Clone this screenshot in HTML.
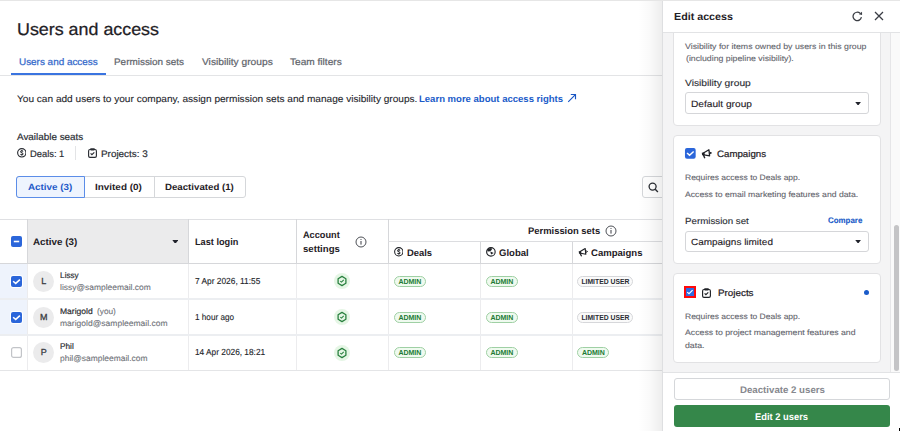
<!DOCTYPE html>
<html><head><meta charset="utf-8"><style>
html,body{margin:0;padding:0;background:#fff;width:900px;height:431px;overflow:hidden;position:relative}
body{font-family:"Liberation Sans",sans-serif}
.t{position:absolute;white-space:nowrap;line-height:1;transform-origin:0 0;text-rendering:geometricPrecision}
.r{position:absolute}
.av{width:21px;height:21px;border-radius:50%;background:#ebebec;color:#3a3d44;font-size:9px;line-height:21px;text-align:center;-webkit-text-stroke:0.3px #3a3d44}
.badge{height:11px;box-sizing:border-box;border-radius:6px;font-size:7px;font-weight:700;line-height:9px;text-align:center;letter-spacing:0}
.badge.g{border:1px solid #9fd0a4;background:#effaef;color:#217a34}
.badge.n{border:1px solid #d6d7da;background:#fafafa;color:#2a2d33;font-size:6.8px}
.card{background:#fff;border:1px solid #e2e2e4;border-radius:4px;box-sizing:border-box}
.sel{background:#fff;border:1px solid #d5d6d9;border-radius:3px;box-sizing:border-box}
</style></head><body>
<div class="t" style="left:16.55px;top:21px;font-size:17px;color:#1f2126;transform:scaleX(1.0508);-webkit-text-stroke:0.25px #1f2126;">Users and access</div>
<div class="t" style="left:19.00px;top:58px;font-size:9.5px;color:#356acb;transform:scaleX(1.0429);-webkit-text-stroke:0.25px #356acb;">Users and access</div>
<div class="t" style="left:114.40px;top:58px;font-size:9.5px;color:#62656c;transform:scaleX(1.0446);-webkit-text-stroke:0.22px #62656c;">Permission sets</div>
<div class="t" style="left:202.00px;top:58px;font-size:9.5px;color:#62656c;transform:scaleX(1.0745);-webkit-text-stroke:0.22px #62656c;">Visibility groups</div>
<div class="t" style="left:289.60px;top:58px;font-size:9.5px;color:#62656c;transform:scaleX(1.0652);-webkit-text-stroke:0.22px #62656c;">Team filters</div>
<div class="r" style="left:0px;top:75px;width:663px;height:1px;background:#e3e4e6"></div>
<div class="r" style="left:11px;top:73px;width:95px;height:2px;background:#3a74e0"></div>
<div class="t" style="left:16.70px;top:95px;font-size:9.5px;color:#24262b;transform:scaleX(1.0619);-webkit-text-stroke:0.1px #24262b;">You can add users to your company, assign permission sets and manage visibility groups.</div>
<div class="t" style="left:419.20px;top:95px;font-size:9.5px;color:#1a5bc9;font-weight:700;transform:scaleX(1.0033);">Learn more about access rights</div>
<svg class="r" style="left:566.8px;top:93.2px" width="10" height="10" viewBox="0 0 10 10"><path d="M1.2 8.8 L8.4 1.6 M3.8 1.5 H8.5 V6.2" stroke="#1a56c4" stroke-width="1.15" fill="none"/></svg>
<div class="t" style="left:16.50px;top:133px;font-size:9.5px;color:#2a2d33;transform:scaleX(1.0395);-webkit-text-stroke:0.18px #2a2d33;">Available seats</div>
<svg class="r" style="left:16.9px;top:148.3px" width="9.6" height="9.6" viewBox="0 0 10 10"><circle cx="5" cy="5" r="4.35" stroke="#2a2d33" stroke-width="1.2" fill="none"/><path d="M6.2 3.75 C6 3.25 5.6 3.0 5 3.0 C4.3 3.0 3.8 3.4 3.8 3.95 C3.8 5.0 6.25 4.7 6.25 5.95 C6.25 6.6 5.7 7.0 5 7.0 C4.4 7.0 3.9 6.75 3.7 6.3" stroke="#2a2d33" stroke-width="1.05" fill="none"/><path d="M5 2.1 V3.1 M5 6.9 V7.9" stroke="#2a2d33" stroke-width="1.05"/></svg>
<div class="t" style="left:30.00px;top:150px;font-size:9.5px;color:#2a2d33;transform:scaleX(0.9836);-webkit-text-stroke:0.18px #2a2d33;">Deals: 1</div>
<div class="r" style="left:75px;top:146px;width:1px;height:13.5px;background:#e3e4e6"></div>
<svg class="r" style="left:87.5px;top:148.2px" width="9" height="10" viewBox="0 0 9 10"><rect x="0.6" y="1.5" width="7.8" height="7.9" rx="1.4" stroke="#2a2d33" stroke-width="1.15" fill="none"/><rect x="2.1" y="0.2" width="4.8" height="2.2" rx="0.8" fill="#2a2d33"/><path d="M2.6 5.4 L3.9 6.7 L6.3 4.3" stroke="#2a2d33" stroke-width="1.15" fill="none"/></svg>
<div class="t" style="left:100.50px;top:150px;font-size:9.5px;color:#2a2d33;transform:scaleX(1.0427);-webkit-text-stroke:0.18px #2a2d33;">Projects: 3</div>
<div class="r" style="left:16px;top:176px;width:230px;height:21.5px;border:1px solid #d5d7da;border-radius:3px;box-sizing:border-box;background:#fff"></div>
<div class="r" style="left:16px;top:176px;width:68.5px;height:21.5px;border:1px solid #5b8de8;border-radius:3px 0 0 3px;box-sizing:border-box;background:#eef4fe"></div>
<div class="r" style="left:153.5px;top:176px;width:1px;height:21.5px;background:#d5d7da"></div>
<div class="t" style="left:28.00px;top:183px;font-size:9.02px;color:#1e59c8;font-weight:700;transform:scaleX(1.0916);">Active (3)</div>
<div class="t" style="left:94.80px;top:183px;font-size:9.02px;color:#1f2126;font-weight:700;transform:scaleX(1.0992);">Invited (0)</div>
<div class="t" style="left:164.70px;top:183px;font-size:9.02px;color:#1f2126;font-weight:700;transform:scaleX(1.0728);">Deactivated (1)</div>
<div class="r" style="left:642px;top:176px;width:40px;height:21.5px;border:1px solid #d5d7da;border-radius:3px;box-sizing:border-box;background:#fff"></div>
<svg class="r" style="left:647.5px;top:182px" width="11" height="11" viewBox="0 0 11 11"><circle cx="4.6" cy="4.6" r="3.5" stroke="#2a2d33" stroke-width="1.3" fill="none"/><path d="M7.2 7.2 L9.9 9.9" stroke="#2a2d33" stroke-width="1.4"/></svg>
<div class="r" style="left:0px;top:219px;width:663px;height:1px;background:#dfe0e3"></div>
<div class="r" style="left:28px;top:220px;width:160px;height:43px;background:#ebebec"></div>
<div class="r" style="left:0px;top:264px;width:27px;height:71px;background:#eef3fc"></div>
<div class="r" style="left:27px;top:219px;width:1px;height:44px;background:#d6d7da"></div>
<div class="r" style="left:27px;top:263px;width:1px;height:107px;background:#ececee"></div>
<div class="r" style="left:188px;top:219px;width:1px;height:44px;background:#d6d7da"></div>
<div class="r" style="left:188px;top:263px;width:1px;height:107px;background:#ececee"></div>
<div class="r" style="left:296px;top:219px;width:1px;height:44px;background:#d6d7da"></div>
<div class="r" style="left:296px;top:263px;width:1px;height:107px;background:#ececee"></div>
<div class="r" style="left:388px;top:219px;width:1px;height:44px;background:#d6d7da"></div>
<div class="r" style="left:388px;top:263px;width:1px;height:107px;background:#ececee"></div>
<div class="r" style="left:480px;top:241px;width:1px;height:22px;background:#d6d7da"></div>
<div class="r" style="left:480px;top:263px;width:1px;height:107px;background:#ececee"></div>
<div class="r" style="left:572px;top:241px;width:1px;height:22px;background:#d6d7da"></div>
<div class="r" style="left:572px;top:263px;width:1px;height:107px;background:#ececee"></div>
<div class="r" style="left:388px;top:241px;width:275px;height:1px;background:#dcdde0"></div>
<div class="r" style="left:0px;top:263px;width:663px;height:1px;background:#d6d7da"></div>
<div class="r" style="left:0px;top:298px;width:663px;height:2px;background:#eceef1"></div>
<div class="r" style="left:0px;top:334px;width:663px;height:2px;background:#eceef1"></div>
<div class="r" style="left:0px;top:370px;width:663px;height:1px;background:#e4e5e7"></div>
<svg class="r" style="left:9.7px;top:235.0px" width="13.0" height="13.0" viewBox="-1 -1 13 13"><rect x="-1" y="-1" width="13" height="13" rx="3" fill="#fff"/><rect x="0" y="0" width="11" height="11" rx="2" fill="#2b66da"/><rect x="2.8" y="4.7" width="5.4" height="1.6" fill="#fff"/></svg>
<div class="t" style="left:33.30px;top:238px;font-size:9.5px;color:#1f2126;font-weight:700;transform:scaleX(1.0329);">Active (3)</div>
<svg class="r" style="left:171.5px;top:239.7px" width="6.6" height="3.8" viewBox="0 0 7 4"><path d="M0.3 0 H6.7 L3.9 3.6 Q3.5 4 3.1 3.6 Z" fill="#21232c"/></svg>
<div class="t" style="left:194.70px;top:238px;font-size:9.5px;color:#1f2126;font-weight:700;transform:scaleX(0.9654);">Last login</div>
<div class="t" style="left:302.70px;top:231px;font-size:9.5px;color:#1f2126;font-weight:700;transform:scaleX(0.9656);">Account</div>
<div class="t" style="left:302.70px;top:245px;font-size:9.5px;color:#1f2126;font-weight:700;transform:scaleX(1.0127);">settings</div>
<svg class="r" style="left:355px;top:236px" width="12" height="12" viewBox="0 0 12 12"><circle cx="6" cy="6" r="5" stroke="#3a3d44" stroke-width="0.9" fill="none"/><rect x="5.5" y="5" width="1" height="3.6" fill="#3a3d44"/><circle cx="6" cy="3.5" r="0.6" fill="#3a3d44"/></svg>
<div class="t" style="left:527.50px;top:227px;font-size:9.5px;color:#1f2126;font-weight:700;transform:scaleX(0.9906);">Permission sets</div>
<svg class="r" style="left:604.5px;top:225px" width="12" height="12" viewBox="0 0 12 12"><circle cx="6" cy="6" r="5" stroke="#3a3d44" stroke-width="0.9" fill="none"/><rect x="5.5" y="5" width="1" height="3.6" fill="#3a3d44"/><circle cx="6" cy="3.5" r="0.6" fill="#3a3d44"/></svg>
<svg class="r" style="left:393.9px;top:247.4px" width="9.6" height="9.6" viewBox="0 0 10 10"><circle cx="5" cy="5" r="4.35" stroke="#1f2126" stroke-width="1.1" fill="none"/><path d="M6.2 3.75 C6 3.25 5.6 3.0 5 3.0 C4.3 3.0 3.8 3.4 3.8 3.95 C3.8 5.0 6.25 4.7 6.25 5.95 C6.25 6.6 5.7 7.0 5 7.0 C4.4 7.0 3.9 6.75 3.7 6.3" stroke="#1f2126" stroke-width="1.05" fill="none"/><path d="M5 2.1 V3.1 M5 6.9 V7.9" stroke="#1f2126" stroke-width="1.05"/></svg>
<div class="t" style="left:407.20px;top:249px;font-size:9.5px;color:#1f2126;font-weight:700;transform:scaleX(0.9894);">Deals</div>
<svg class="r" style="left:486.3px;top:247.4px" width="9.8" height="9.8" viewBox="0 0 10 10"><circle cx="5" cy="5" r="4.35" stroke="#1f2126" stroke-width="1.15" fill="none"/><path d="M1.3 3.2 C2.2 1.7 3.8 0.9 5.6 1 L6 2.7 L4.3 4.3 L1.9 4.6 Z" fill="#1f2126"/><path d="M4.4 4.5 L7.9 6.1 L5.2 7.6 Z" fill="#1f2126"/></svg>
<div class="t" style="left:499.00px;top:249px;font-size:9.5px;color:#1f2126;font-weight:700;transform:scaleX(1.0028);">Global</div>
<svg class="r" style="left:577.5px;top:247.2px" width="11.0" height="10.0" viewBox="0 0 11 10"><path d="M2.6 4.3 L7.2 1.6 L7.8 7.2 L2.8 6.3 Z" stroke="#1f2126" stroke-width="1.15" stroke-linejoin="round" fill="none"/><path d="M0.7 4.3 L2.9 3.9 L3.2 6.5 L1 6.7 Z" fill="#1f2126"/><path d="M2.2 6.4 L3.3 8.8" stroke="#1f2126" stroke-width="1.3" stroke-linecap="round"/><path d="M7.6 3.6 L9.6 4.5 L7.8 5.6" stroke="#1f2126" stroke-width="0.9" fill="none"/></svg>
<div class="t" style="left:590.80px;top:249px;font-size:9.5px;color:#1f2126;font-weight:700;transform:scaleX(1.0054);">Campaigns</div>
<svg class="r" style="left:9.7px;top:274.5px" width="13.0" height="13.0" viewBox="-1 -1 13 13"><rect x="-1" y="-1" width="13" height="13" rx="3" fill="#fff"/><rect x="0" y="0" width="11" height="11" rx="2" fill="#2b66da"/><path d="M2.1 5.2 L4.7 7.4 L8.9 3.6" stroke="#fff" stroke-width="1.5" fill="none"/></svg>
<div class="r av" style="left:33.3px;top:270.5px">L</div>
<div class="t" style="left:60.10px;top:272px;font-size:8.17px;color:#2a2c31;-webkit-text-stroke:0.18px #2a2c31;">Lissy</div>
<div class="t" style="left:60.10px;top:284px;font-size:8.17px;color:#6f7278;transform:scaleX(1.0364);-webkit-text-stroke:0.1px #6f7278;">lissy@sampleemail.com</div>
<div class="t" style="left:194.80px;top:277px;font-size:8.74px;color:#24262b;transform:scaleX(0.9559);-webkit-text-stroke:0.12px #24262b;">7 Apr 2026, 11:55</div>
<svg class="r" style="left:334.2px;top:273.0px" width="16" height="16" viewBox="0 0 16 16"><circle cx="8" cy="8" r="8" fill="#e5f6e5"/><path d="M8 3.4 L11.9 5.7 V10.3 L8 12.6 L4.1 10.3 V5.7 Z" stroke="#2a8140" stroke-width="1.3" stroke-linejoin="round" fill="none"/><path d="M6.3 8.1 L7.5 9.1 L9.7 6.9" stroke="#2a8140" stroke-width="1.1" fill="none"/></svg>
<div class="r badge g" style="left:393.9px;top:275.5px;width:32px">ADMIN</div>
<div class="r badge g" style="left:485.9px;top:275.5px;width:32px">ADMIN</div>
<div class="r badge n" style="left:577.4px;top:275.5px;width:56px">LIMITED USER</div>
<svg class="r" style="left:9.7px;top:310.5px" width="13.0" height="13.0" viewBox="-1 -1 13 13"><rect x="-1" y="-1" width="13" height="13" rx="3" fill="#fff"/><rect x="0" y="0" width="11" height="11" rx="2" fill="#2b66da"/><path d="M2.1 5.2 L4.7 7.4 L8.9 3.6" stroke="#fff" stroke-width="1.5" fill="none"/></svg>
<div class="r av" style="left:33.3px;top:306.5px">M</div>
<div class="t" style="left:60.10px;top:308px;font-size:8.17px;color:#2a2c31;transform:scaleX(1.0459);-webkit-text-stroke:0.18px #2a2c31;">Marigold</div>
<div class="t" style="left:97.00px;top:308px;font-size:8.17px;color:#6f7278;transform:scaleX(1.0124);-webkit-text-stroke:0.1px #6f7278;">(you)</div>
<div class="t" style="left:60.10px;top:320px;font-size:8.17px;color:#6f7278;transform:scaleX(1.0443);-webkit-text-stroke:0.1px #6f7278;">marigold@sampleemail.com</div>
<div class="t" style="left:194.80px;top:313px;font-size:8.74px;color:#24262b;transform:scaleX(0.9354);-webkit-text-stroke:0.12px #24262b;">1 hour ago</div>
<svg class="r" style="left:334.2px;top:309.0px" width="16" height="16" viewBox="0 0 16 16"><circle cx="8" cy="8" r="8" fill="#e5f6e5"/><path d="M8 3.4 L11.9 5.7 V10.3 L8 12.6 L4.1 10.3 V5.7 Z" stroke="#2a8140" stroke-width="1.3" stroke-linejoin="round" fill="none"/><path d="M6.3 8.1 L7.5 9.1 L9.7 6.9" stroke="#2a8140" stroke-width="1.1" fill="none"/></svg>
<div class="r badge g" style="left:393.9px;top:311.5px;width:32px">ADMIN</div>
<div class="r badge g" style="left:485.9px;top:311.5px;width:32px">ADMIN</div>
<div class="r badge n" style="left:577.4px;top:311.5px;width:56px">LIMITED USER</div>
<svg class="r" style="left:9.7px;top:346.0px" width="13.0" height="13.0" viewBox="-1 -1 13 13"><rect x="-1" y="-1" width="13" height="13" rx="3" fill="#fff"/><rect x="0.6" y="0.6" width="9.8" height="9.8" rx="2" fill="#fff" stroke="#c2c4c8" stroke-width="1.2"/></svg>
<div class="r av" style="left:33.3px;top:342.0px">P</div>
<div class="t" style="left:60.10px;top:343px;font-size:8.17px;color:#2a2c31;transform:scaleX(1.0081);-webkit-text-stroke:0.18px #2a2c31;">Phil</div>
<div class="t" style="left:60.10px;top:355px;font-size:8.17px;color:#6f7278;transform:scaleX(1.0362);-webkit-text-stroke:0.1px #6f7278;">phil@sampleemail.com</div>
<div class="t" style="left:194.80px;top:348px;font-size:8.74px;color:#24262b;transform:scaleX(0.9497);-webkit-text-stroke:0.12px #24262b;">14 Apr 2026, 18:21</div>
<svg class="r" style="left:334.2px;top:344.5px" width="16" height="16" viewBox="0 0 16 16"><circle cx="8" cy="8" r="8" fill="#e5f6e5"/><path d="M8 3.4 L11.9 5.7 V10.3 L8 12.6 L4.1 10.3 V5.7 Z" stroke="#2a8140" stroke-width="1.3" stroke-linejoin="round" fill="none"/><path d="M6.3 8.1 L7.5 9.1 L9.7 6.9" stroke="#2a8140" stroke-width="1.1" fill="none"/></svg>
<div class="r badge g" style="left:393.9px;top:347.0px;width:32px">ADMIN</div>
<div class="r badge g" style="left:485.9px;top:347.0px;width:32px">ADMIN</div>
<div class="r badge g" style="left:577.4px;top:347.0px;width:32px">ADMIN</div>
<div class="r" style="left:638px;top:0;width:24px;height:431px;background:linear-gradient(to right,rgba(0,0,0,0),rgba(0,0,0,0.025) 50%,rgba(0,0,0,0.07))"></div>
<div class="r" style="left:663px;top:1px;width:237px;height:430px;background:#f4f4f5"></div>
<div class="r" style="left:662px;top:1px;width:1px;height:430px;background:#dedfe1"></div>
<div class="r" style="left:890px;top:33px;width:10px;height:339px;background:#fafafa;border-left:1px solid #e6e6e8;box-sizing:border-box"></div>
<div class="r" style="left:893.5px;top:225px;width:5px;height:146px;border-radius:3px;background:#c4c4c6"></div>
<div class="r card" style="left:673px;top:-10px;width:208px;height:135.5px"></div>
<div class="r card" style="left:673px;top:135px;width:208px;height:129px"></div>
<div class="r card" style="left:673px;top:273px;width:208px;height:90px"></div>
<div class="r" style="left:663px;top:1px;width:237px;height:32px;background:#fff;border-bottom:1px solid #e2e3e5;box-sizing:border-box"></div>
<div class="t" style="left:674.40px;top:13px;font-size:10.26px;color:#1f2126;font-weight:700;transform:scaleX(1.0439);">Edit access</div>
<svg class="r" style="left:852px;top:10.6px" width="11" height="11" viewBox="0 0 11 11"><path d="M8.1 2.3 A4.2 4.2 0 1 0 9.4 6.2" stroke="#3a3d44" stroke-width="1.25" fill="none"/><path d="M6.9 3.3 L10 0.8 L10.1 4 Z" fill="#3a3d44"/></svg>
<svg class="r" style="left:873.9px;top:10.9px" width="10" height="10" viewBox="0 0 10 10"><path d="M1 1 L9 9 M9 1 L1 9" stroke="#3a3d44" stroke-width="1.25"/></svg>
<div class="t" style="left:685.00px;top:43px;font-size:7.79px;color:#5f636b;transform:scaleX(1.1259);-webkit-text-stroke:0.1px #5f636b;">Visibility for items owned by users in this group</div>
<div class="t" style="left:685.50px;top:55px;font-size:7.79px;color:#5f636b;transform:scaleX(1.1226);-webkit-text-stroke:0.1px #5f636b;">(including pipeline visibility).</div>
<div class="t" style="left:685.10px;top:79px;font-size:8.84px;color:#2a2d33;transform:scaleX(1.1592);-webkit-text-stroke:0.12px #2a2d33;">Visibility group</div>
<div class="r sel" style="left:685px;top:92px;width:184px;height:22px"></div>
<div class="t" style="left:691.10px;top:100px;font-size:9.02px;color:#1f2126;transform:scaleX(1.1254);-webkit-text-stroke:0.12px #1f2126;">Default group</div>
<svg class="r" style="left:854.5px;top:101.5px" width="6.2" height="3.6" viewBox="0 0 7 4"><path d="M0.3 0 H6.7 L3.9 3.6 Q3.5 4 3.1 3.6 Z" fill="#21232c"/></svg>
<svg class="r" style="left:684.0272727272727px;top:147.42727272727274px" width="12.645454545454545" height="12.645454545454545" viewBox="-1 -1 13 13"><rect x="-1" y="-1" width="13" height="13" rx="3" fill="#fff"/><rect x="0" y="0" width="11" height="11" rx="2" fill="#2b66da"/><path d="M2.1 5.2 L4.7 7.4 L8.9 3.6" stroke="#fff" stroke-width="1.5" fill="none"/></svg>
<svg class="r" style="left:701.2px;top:148.2px" width="12.100000000000001" height="11.0" viewBox="0 0 11 10"><path d="M2.6 4.3 L7.2 1.6 L7.8 7.2 L2.8 6.3 Z" stroke="#1f2126" stroke-width="1.15" stroke-linejoin="round" fill="none"/><path d="M0.7 4.3 L2.9 3.9 L3.2 6.5 L1 6.7 Z" fill="#1f2126"/><path d="M2.2 6.4 L3.3 8.8" stroke="#1f2126" stroke-width="1.3" stroke-linecap="round"/><path d="M7.6 3.6 L9.6 4.5 L7.8 5.6" stroke="#1f2126" stroke-width="0.9" fill="none"/></svg>
<div class="t" style="left:717.40px;top:150px;font-size:9.31px;color:#1f2126;transform:scaleX(1.0427);-webkit-text-stroke:0.22px #1f2126;">Campaigns</div>
<div class="t" style="left:685.00px;top:174px;font-size:7.79px;color:#5f636b;transform:scaleX(1.0914);-webkit-text-stroke:0.1px #5f636b;">Requires access to Deals app.</div>
<div class="t" style="left:685.00px;top:191px;font-size:7.79px;color:#5f636b;transform:scaleX(1.1122);-webkit-text-stroke:0.1px #5f636b;">Access to email marketing features and data.</div>
<div class="t" style="left:685.30px;top:217px;font-size:8.84px;color:#2a2d33;transform:scaleX(1.1020);-webkit-text-stroke:0.12px #2a2d33;">Permission set</div>
<div class="t" style="left:828.40px;top:217px;font-size:8.07px;color:#1a5bc9;font-weight:700;transform:scaleX(0.9813);-webkit-text-stroke:0.12px #1a5bc9;">Compare</div>
<div class="r sel" style="left:685px;top:230.5px;width:183.5px;height:21.3px"></div>
<div class="t" style="left:691.00px;top:238px;font-size:9.02px;color:#1f2126;transform:scaleX(1.1046);-webkit-text-stroke:0.12px #1f2126;">Campaigns limited</div>
<svg class="r" style="left:854.5px;top:239.8px" width="6.2" height="3.6" viewBox="0 0 7 4"><path d="M0.3 0 H6.7 L3.9 3.6 Q3.5 4 3.1 3.6 Z" fill="#21232c"/></svg>
<svg class="r" style="left:684px;top:286px" width="12" height="12" viewBox="0 0 12 12"><rect x="0" y="0" width="12" height="12" fill="#ff0a0a"/><rect x="2" y="2" width="8" height="8" fill="#2f6be0"/><path d="M3.2 6.1 L5 7.7 L8.6 4.1" stroke="#fff" stroke-width="1.2" fill="none"/></svg>
<svg class="r" style="left:702.2px;top:287.8px" width="9" height="10" viewBox="0 0 9 10"><rect x="0.6" y="1.5" width="7.8" height="7.9" rx="1.4" stroke="#1f2126" stroke-width="1.15" fill="none"/><rect x="2.1" y="0.2" width="4.8" height="2.2" rx="0.8" fill="#1f2126"/><path d="M2.6 5.4 L3.9 6.7 L6.3 4.3" stroke="#1f2126" stroke-width="1.15" fill="none"/></svg>
<div class="t" style="left:717.60px;top:289px;font-size:9.31px;color:#1f2126;transform:scaleX(1.0579);-webkit-text-stroke:0.22px #1f2126;">Projects</div>
<div class="r" style="left:863.5px;top:289.5px;width:5.3px;height:5.3px;border-radius:50%;background:#1a5bc9"></div>
<div class="t" style="left:685.00px;top:313px;font-size:7.79px;color:#5f636b;transform:scaleX(1.0914);-webkit-text-stroke:0.1px #5f636b;">Requires access to Deals app.</div>
<div class="t" style="left:685.00px;top:329px;font-size:7.79px;color:#5f636b;transform:scaleX(1.1203);-webkit-text-stroke:0.1px #5f636b;">Access to project management features and</div>
<div class="t" style="left:685.00px;top:342px;font-size:7.79px;color:#5f636b;transform:scaleX(1.1257);-webkit-text-stroke:0.1px #5f636b;">data.</div>
<div class="r" style="left:663px;top:372px;width:237px;height:59px;background:#fff;border-top:1px solid #e2e3e5;box-sizing:border-box"></div>
<div class="r" style="left:674px;top:378px;width:216px;height:22px;border:1px solid #d5d7da;border-radius:3px;box-sizing:border-box;background:#fff"></div>
<div class="t" style="left:739.50px;top:386px;font-size:9.59px;color:#86888e;font-weight:700;transform:scaleX(1.0095);">Deactivate 2 users</div>
<div class="r" style="left:674px;top:405.4px;width:216px;height:21.5px;border-radius:3px;background:#35874a"></div>
<div class="t" style="left:755.40px;top:413px;font-size:9.78px;color:#ffffff;font-weight:700;transform:scaleX(0.9566);">Edit 2 users</div>
<div class="r" style="left:0px;top:0px;width:900px;height:1px;background:#e6e6e6"></div>
<div class="r" style="left:899px;top:428px;width:1px;height:3px;background:#000"></div>
</body></html>
